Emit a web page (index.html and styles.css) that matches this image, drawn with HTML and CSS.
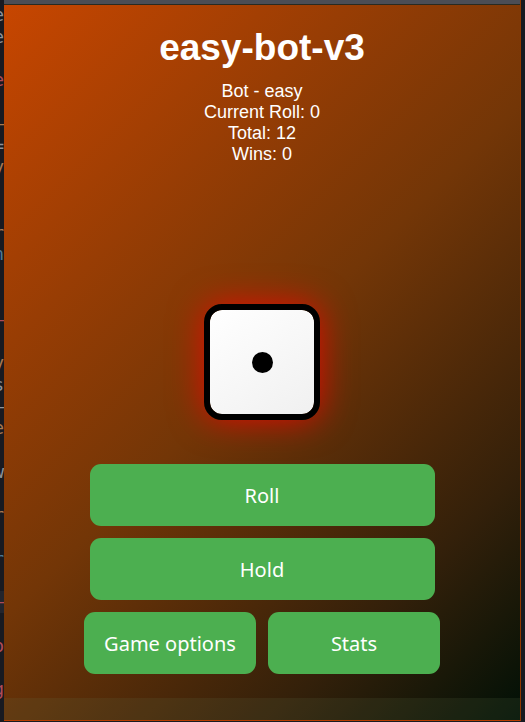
FILE: index.html
```
<!DOCTYPE html>
<html lang="en">
<head>
<meta charset="utf-8">
<title>easy-bot-v3</title>
<meta name="viewport" content="width=device-width, initial-scale=1">
<link rel="stylesheet" href="styles.css">
</head>
<body>
<div class="desktop">
  <div class="editor" aria-hidden="true">
    <span>e</span><span>e</span><span></span><span class="red">e</span><span></span><span class="orange">—</span><span>=</span><span class="orange">y</span><span></span><span></span><span class="orange">r</span><span class="blue">n</span><span></span><span></span><span class="red">—</span><span></span><span class="orange">y</span><span>s</span><span>—</span><span class="orange">e</span><span></span><span>w</span><span></span><span class="orange">r</span><span></span><span class="blue">r</span><span></span><span class="red current">—</span><span></span><span class="red">o</span><span></span><span class="red">g</span><span></span>
  </div>
  <main class="window">
    <header class="player">
      <h1>easy-bot-v3</h1>
      <p>Bot - easy</p>
      <p>Current Roll: 0</p>
      <p>Total: 12</p>
      <p>Wins: 0</p>
    </header>
    <div class="die" role="img" aria-label="Die showing one"><span class="pip"></span></div>
    <div class="actions">
      <button class="wide" type="button">Roll</button>
      <button class="wide" type="button">Hold</button>
      <div class="pair">
        <button type="button">Game options</button>
        <button type="button">Stats</button>
      </div>
    </div>
    <footer class="status"></footer>
  </main>
</div>
</body>
</html>
```
FILE: styles.css
```
* {
  box-sizing: border-box;
}

body {
  margin: 0;
  background: #181a21;
  color: #fff;
  font-family: "Liberation Sans", Arial, sans-serif;
  font-size: 18px;
}

.desktop {
  display: grid;
  grid-template-columns: 4px 1fr 4px;
  min-height: 100vh;
}

.editor {
  display: grid;
  grid-auto-rows: 1fr;
  height: 100vh;
  padding-top: 4px;
  overflow: hidden;
  color: #8d929b;
  font: 18px/22px "DejaVu Sans Mono", monospace;
}

.editor span {
  display: flex;
  justify-content: flex-end;
  min-width: 0;
  min-height: 0;
}

.editor .red { color: #b04a58; }
.editor .orange { color: #a87850; }
.editor .blue { color: #4c7896; }
.editor .current { background: #23252d; }

.window {
  display: flex;
  flex-direction: column;
  align-items: center;
  border: solid #903800;
  border-width: 0 1px 1px 0;
  border-bottom-color: #b83c00;
  margin-bottom: 1px;
  background: linear-gradient(135deg, #c84600, #733607 50%, #33200a 80%, #001006);
  background-origin: border-box;
}

.window::before {
  content: "";
  align-self: stretch;
  height: 4px;
  border-bottom: 1px solid #292a21;
  background: #4b4d55;
}

.player {
  padding-top: 22px;
  text-align: center;
  line-height: 21px;
}

.player h1 {
  margin: 0 0 12px;
  font-size: 37px;
  line-height: 42px;
}

.player p {
  margin: 0;
}

.die {
  display: grid;
  place-items: center;
  width: 116px;
  height: 116px;
  margin: auto 0 44px;
  border: 6px solid #000;
  border-radius: 18px;
  background: linear-gradient(145deg, #fff, #f0f0f0) padding-box;
  box-shadow: 0 0 34px rgba(255, 0, 0, 0.8);
}

.pip {
  width: 21px;
  height: 21px;
  border-radius: 50%;
  background: #000;
}

.actions {
  display: flex;
  flex-direction: column;
  align-items: center;
  gap: 12px;
  width: 69%;
  margin-bottom: 24px;
}

.pair {
  display: flex;
  justify-content: center;
  gap: 12px;
  width: 100%;
}

button {
  flex: none;
  width: 172px;
  height: 62px;
  padding: 0;
  border: 0;
  border-radius: 11px;
  background: #4caf50;
  color: #fff;
  font: 20px "Noto Sans", sans-serif;
}

.wide {
  width: 345px;
}

.status {
  align-self: stretch;
  height: 22px;
  background: rgba(100, 120, 80, 0.15);
}
```
